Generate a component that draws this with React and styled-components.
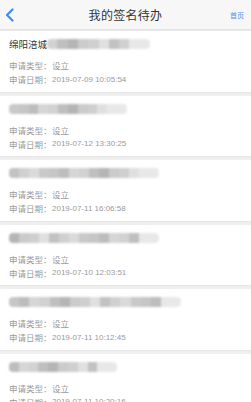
import React from "react";
import styled, { createGlobalStyle } from "styled-components";

const GlobalStyle = createGlobalStyle`
  html, body {
    margin: 0;
    padding: 0;
    background: #efefef;
  }
  body {
    font-family: "Noto Sans CJK SC", "Noto Sans", sans-serif;
    overflow: hidden;
  }
`;

const Page = styled.div`
  width: 251px;
  height: 402px;
  overflow: hidden;
  background: #efefef;
`;

const Header = styled.div`
  height: 29px;
  display: grid;
  grid-template-columns: 40px 1fr 40px;
  align-items: center;
  background: #f7f7f7;
  border-bottom: 1px solid #e3e3e3;
  box-shadow: 0 1px 2px rgba(0, 0, 0, 0.04);
`;

const BackButton = styled.div`
  display: flex;
  align-items: center;
  padding-left: 5px;
  height: 29px;
`;

const Title = styled.div`
  text-align: center;
  font-size: 12px;
  color: #333;
  letter-spacing: 0.3px;
`;

const HomeLink = styled.div`
  text-align: right;
  padding-right: 7px;
  font-size: 7px;
  color: #4b93ef;
  padding-top: 1px;
`;

const List = styled.div`
  display: flex;
  flex-direction: column;
  gap: 3px;
  padding-top: 1px;
`;

const Card = styled.div`
  background: #fff;
  height: 61.5px;
  box-sizing: border-box;
  padding: 7px 9px 0;
  border-bottom: 1px solid #e6e6e6;
`;

const CardTitle = styled.div`
  display: flex;
  align-items: center;
  height: 12px;
  font-size: 9.5px;
  color: #333;
  margin-bottom: 8px;
`;

const Mosaic = styled.div`
  display: flex;
  height: 10px;
  width: ${(p) => p.$width}px;
  border-radius: 4px;
  overflow: hidden;
  filter: blur(0.8px);
`;

const Cell = styled.div`
  flex: 1;
  background: ${(p) => p.$color};
`;

const InfoRow = styled.div`
  display: flex;
  align-items: center;
  height: 14px;
  font-size: 8.5px;
  color: #9a9a9a;
`;

const Label = styled.span`
  width: 43px;
`;

const Value = styled.span`
  font-family: "Liberation Sans", "Noto Sans CJK SC", sans-serif;
  font-size: ${(p) => (p.$num ? "8px" : "8.5px")};
  ${(p) => (p.$num ? "" : 'font-family: "Noto Sans CJK SC", sans-serif;')}
`;

const shades = ["#c9c9c9", "#bdbdbd", "#d2d2d2", "#b5b5b5", "#cfcfcf", "#c2c2c2", "#dadada", "#c6c6c6", "#d6d6d6", "#bfbfbf", "#cbcbcb", "#e0e0e0", "#d0d0d0", "#c4c4c4", "#e6e6e6", "#eeeeee"];

const items = [
  { prefix: "绵阳涪城", blur: 103, date: "2019-07-09 10:05:54", seed: 2 },
  { blur: 118, date: "2019-07-12 13:30:25", seed: 0 },
  { blur: 150, date: "2019-07-11 16:06:58", seed: 5 },
  { blur: 150, date: "2019-07-10 12:03:51", seed: 3 },
  { blur: 172, date: "2019-07-11 10:12:45", seed: 7 },
  { blur: 108, date: "2019-07-11 10:20:16", seed: 1 },
];

const BlurBar = ({ width, seed }) => {
  const count = Math.round(width / 10);
  const cells = Array.from({ length: count }, (_, i) => {
    const fade = i >= count - 2 ? "#e8e8e8" : shades[(i * 7 + seed) % 13];
    return fade;
  });
  return (
    <Mosaic $width={width}>
      {cells.map((c, i) => (
        <Cell key={i} $color={c} />
      ))}
    </Mosaic>
  );
};

const App = () => (
  <Page>
    <GlobalStyle />
    <Header>
      <BackButton>
        <svg width="10" height="14" viewBox="0 0 10 14">
          <path d="M7.5 1.5 L2 7 L7.5 12.5" fill="none" stroke="#3d8ef2" strokeWidth="2.2" strokeLinecap="round" strokeLinejoin="round" />
        </svg>
      </BackButton>
      <Title>我的签名待办</Title>
      <HomeLink>首页</HomeLink>
    </Header>
    <List>
      {items.map((item, i) => (
        <Card key={i}>
          <CardTitle>
            {item.prefix}
            <BlurBar width={item.blur} seed={item.seed} />
          </CardTitle>
          <InfoRow>
            <Label>申请类型：</Label>
            <Value>设立</Value>
          </InfoRow>
          <InfoRow>
            <Label>申请日期：</Label>
            <Value $num>{item.date}</Value>
          </InfoRow>
        </Card>
      ))}
    </List>
  </Page>
);

export default App;
